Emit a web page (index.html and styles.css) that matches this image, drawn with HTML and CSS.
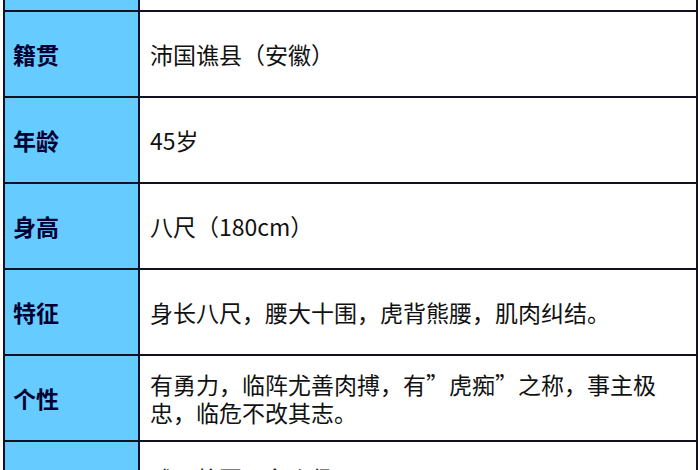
FILE: index.html
```html
<!DOCTYPE html>
<html lang="zh-CN">
<head>
<meta charset="utf-8">
<title>许褚</title>
<link rel="stylesheet" href="styles.css">
</head>
<body>
<div class="sheet">
  <div class="label"></div><div class="value"></div>
  <div class="label">籍贯</div><div class="value">沛国谯县（安徽）</div>
  <div class="label">年龄</div><div class="value">45岁</div>
  <div class="label">身高</div><div class="value">八尺（180cm）</div>
  <div class="label">特征</div><div class="value">身长八尺，腰大十围，虎背熊腰，肌肉纠结。</div>
  <div class="label">个性</div><div class="value">有勇力，临阵尤善肉搏，有”虎痴”之称，事主极忠，临危不改其志。</div>
  <div class="label last">官职</div><div class="value last">武卫将军、牟乡侯</div>
</div>
</body>
</html>
```
FILE: styles.css
```css
html, body {
  margin: 0;
  padding: 0;
  background: #ffffff;
  overflow: hidden;
}
body {
  font-family: "Noto Sans CJK SC", "Liberation Sans", sans-serif;
}
.sheet {
  display: grid;
  grid-template-columns: 135px 558px;
  width: 693px;
  margin: -76px 0 0 3px;
  border-left: 2px solid #111122;
  border-top: 2px solid #111122;
}
.label, .value {
  height: 84px;
  border-right: 2px solid #111122;
  border-bottom: 2px solid #111122;
  display: flex;
  align-items: center;
  box-sizing: content-box;
}
.label {
  background: #66ccff;
  color: #000033;
  font-weight: bold;
  font-size: 23px;
  padding-left: 8px;
  width: 125px;
}
.value {
  background: #ffffff;
  color: #111111;
  font-size: 23px;
  line-height: 28px;
  padding: 0 30px 0 10px;
  width: 516px;
}
.last {
  align-items: flex-start;
  padding-top: 22px;
  height: 62px;
}
```
